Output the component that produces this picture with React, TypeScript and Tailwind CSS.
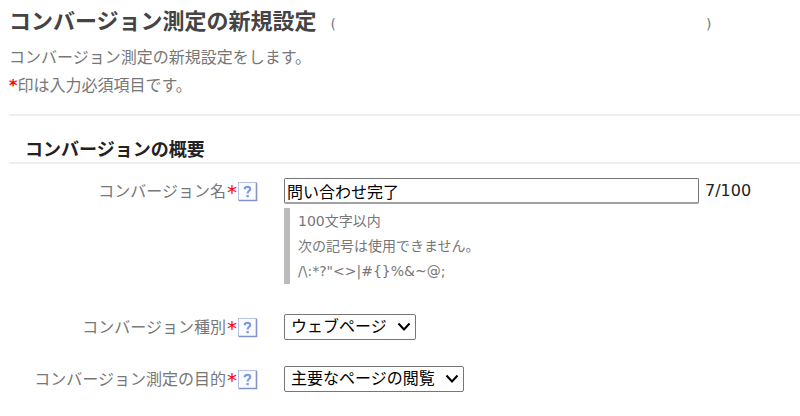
import type { ReactNode } from 'react';

const HelpButton = ({ topic }: { topic: string }) => (
  <button type="button" aria-label={`${topic}のヘルプ`} className="block h-5 w-5 shrink-0">
    <svg viewBox="0 0 20 20" className="h-5 w-5" fill="none">
      <rect x="0.5" y="0.5" width="18" height="18" fill="#fbfcff" stroke="#b4c2e6" />
      <path d="M1 18.5H18.5V1" stroke="#8494c4" strokeWidth="1.6" />
      <path
        d="M6.7 7.2C6.7 5.5 7.8 4.8 9.4 4.8S12.2 5.6 12.2 7C12.2 9 9.6 9 9.6 11.4"
        stroke="#7d9be6"
        strokeWidth="2.2"
      />
      <rect x="8.4" y="13" width="2.4" height="2.2" fill="#7d9be6" />
    </svg>
  </button>
);

const Field = ({ id, label, children }: { id: string; label: string; children: ReactNode }) => (
  <div className="grid grid-cols-[258px_1fr] gap-x-[26px]">
    <div className="flex h-7 items-center justify-end">
      <label htmlFor={id} className="flex whitespace-nowrap text-[#777777]">
        {label}
        <span className="w-3 text-center text-xl leading-6 text-[#ff0000]">*</span>
      </label>
      <HelpButton topic={label} />
    </div>
    <div>{children}</div>
  </div>
);

const SelectBox = ({ id, options }: { id: string; options: string[] }) => (
  <div className="relative inline-block align-top">
    <select
      id={id}
      className="block h-[26px] appearance-none rounded-[2px] border border-[#767676] bg-white pr-[27px] pl-[6px] text-black"
    >
      {options.map((option) => (
        <option key={option}>{option}</option>
      ))}
    </select>
    <svg
      viewBox="0 0 14 10"
      className="pointer-events-none absolute top-2 right-[5px] h-[10px] w-[14px]"
      fill="none"
      stroke="#000000"
      strokeWidth="2"
    >
      <path d="M1.5 1.5L7 7.5L12.5 1.5" />
    </svg>
  </div>
);

export default function App() {
  return (
    <main className="min-h-screen bg-white pl-[9px] font-['DejaVu_Sans','Noto_Sans_CJK_JP',sans-serif] text-base">
      <header className="border-b-2 border-[#eeeeee] pb-[14px] text-[#777777]">
        <div className="flex h-11 items-center">
          <h1 className="text-[22px] leading-[44px] font-bold text-[#444444]">
            コンバージョン測定の新規設定
          </h1>
          <span className="ml-[14px] flex w-[381px] justify-between pt-1 text-sm">
            <span>(</span>
            <span>)</span>
          </span>
        </div>
        <p className="leading-[28px]">コンバージョン測定の新規設定をします。</p>
        <p className="leading-[28px]">
          <span className="font-bold text-[#ff0000]">*</span>印は入力必須項目です。
        </p>
      </header>

      <form>
        <h2 className="mt-[22px] border-b-2 border-[#eeeeee] pl-4 text-lg leading-[24px] font-bold text-[#222222]">
          コンバージョンの概要
        </h2>

        {/* the label column is measured from the page edge */}
        <div className="-ml-[9px] flex flex-col pt-[14px]">
          <Field id="name" label="コンバージョン名">
            <div className="flex items-center gap-[6px]">
              <input
                id="name"
                type="text"
                maxLength={100}
                defaultValue="問い合わせ完了"
                className="h-[26px] w-[415px] rounded-[2px] border border-b-2 border-[#767676] border-b-[#a0a0a0] bg-white px-[2px] text-black"
              />
              <span className="leading-[26px] text-[#222222]">7/100</span>
            </div>
            <div className="mt-1 mb-[30px] border-l-[6px] border-[#bbbbbb] pt-px pl-2 text-sm leading-[25px] text-[#777777]">
              <p>100文字以内</p>
              <p>次の記号は使用できません。</p>
              <p>{'/\\:*?"<>|#{}%&~@;'}</p>
            </div>
          </Field>

          <div className="flex flex-col gap-6">
            <Field id="type" label="コンバージョン種別">
              <SelectBox id="type" options={['ウェブページ']} />
            </Field>
            <Field id="purpose" label="コンバージョン測定の目的">
              <SelectBox id="purpose" options={['主要なページの閲覧']} />
            </Field>
          </div>
        </div>
      </form>
    </main>
  );
}
